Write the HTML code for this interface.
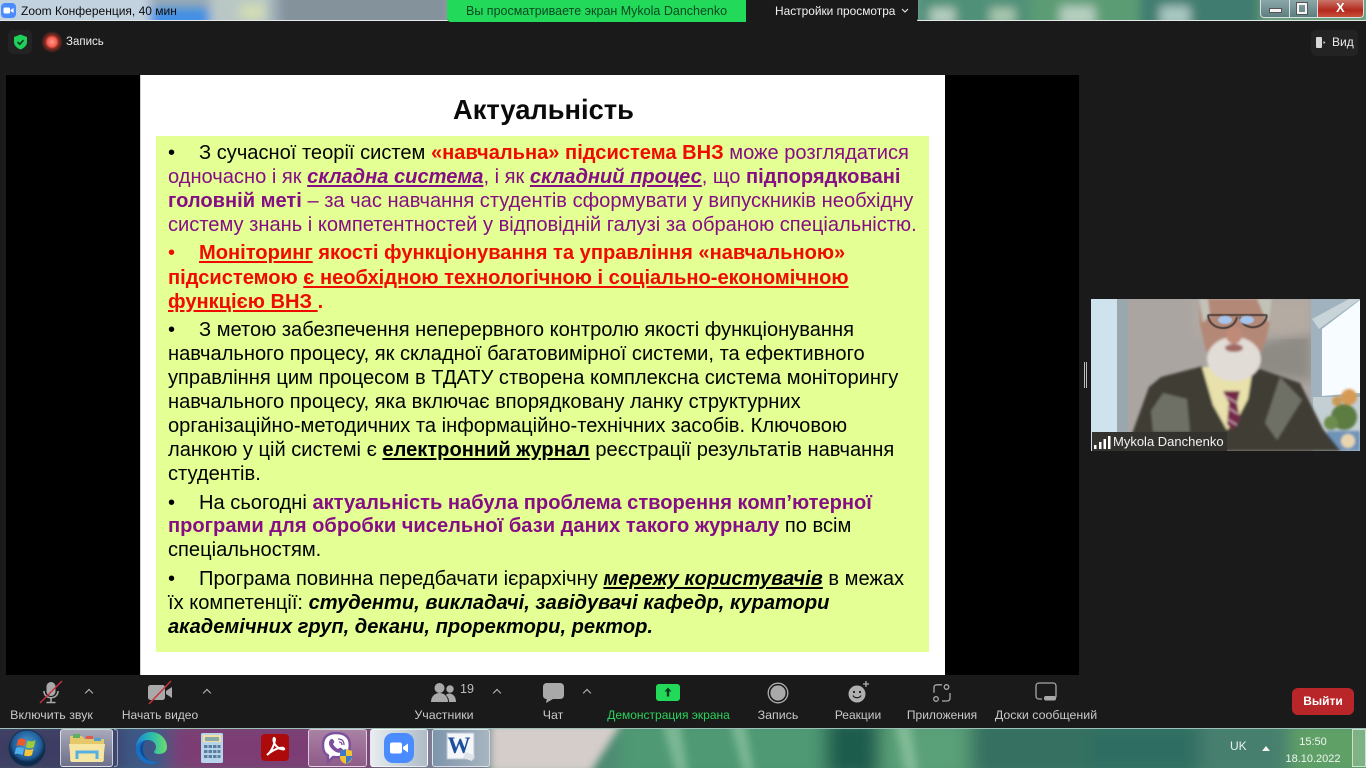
<!DOCTYPE html>
<html lang="uk"><head><meta charset="utf-8"><title>Zoom</title>
<style>
*{box-sizing:border-box}
html,body{margin:0;padding:0;width:1366px;height:768px;overflow:hidden;background:#1a1a1a;font-family:"Liberation Sans",sans-serif}
.a{position:absolute}
svg{position:absolute;display:block}
.l{position:absolute;left:168px;white-space:nowrap;font-size:20.1px;line-height:24px;height:24px;color:#000;filter:blur(.3px)}
.l .t{position:absolute;left:31px;top:0}
.p{color:#850e85}.r{color:#f00b00}.b{font-weight:bold}.u{text-decoration:underline;text-decoration-thickness:1.5px;text-underline-offset:2px}.i{font-style:italic}
.tb{position:absolute;top:708px;font-size:12.4px;line-height:14px;color:#c9c9c9;white-space:nowrap;transform:translateX(-50%)}
.chev{position:absolute;top:690px;width:6px;height:6px;border-left:1.3px solid #bbb;border-top:1.3px solid #bbb;transform:rotate(45deg)}
.btn{position:absolute;top:729px;height:38px;border:1px solid rgba(255,255,255,.65);border-radius:3px;background:linear-gradient(180deg,rgba(255,255,255,.55),rgba(255,255,255,.25))}
</style></head><body>

<!-- title bar wallpaper -->
<svg style="left:0;top:0" width="1366" height="21" viewBox="0 0 1366 21"><defs><filter id="f1" x="-10%" y="-50%" width="120%" height="200%"><feGaussianBlur stdDeviation="5"/></filter></defs>
<rect width="1366" height="21" fill="#9aaab4"/>
<g filter="url(#f1)">
<rect x="-20" y="-10" width="170" height="40" fill="#c3d2df"/>
<rect x="150" y="8" width="60" height="20" fill="#3f8fe6"/>
<rect x="210" y="-10" width="60" height="40" fill="#b9c7c4"/>
<rect x="240" y="4" width="25" height="16" fill="#d2dcb4"/>
<rect x="280" y="-10" width="170" height="40" fill="#84929c"/>
<rect x="915" y="-10" width="120" height="40" fill="#4f9078"/>
<rect x="1030" y="-10" width="110" height="40" fill="#5c9c74"/>
<rect x="930" y="8" width="25" height="16" fill="#b6cfc0"/>
<rect x="990" y="8" width="25" height="16" fill="#a9c8b0"/>
<rect x="1060" y="6" width="35" height="20" fill="#b6cfc0"/>
<rect x="1140" y="-10" width="130" height="40" fill="#3f7d70"/>
<rect x="1160" y="6" width="30" height="20" fill="#a9c8c2"/>
<rect x="1260" y="-10" width="110" height="40" fill="#6ba07a"/>
</g>
<rect y="20" width="1366" height="1" fill="#e4e8e8"/></svg>

<svg style="left:1px;top:3px" width="15" height="15" viewBox="0 0 15 15"><rect width="15" height="15" rx="4" fill="#4a8cff"/><rect x="2.5" y="4.5" width="6.5" height="6" rx="1.2" fill="#fff"/><path d="M9.6 7l3-2v5l-3-2z" fill="#fff"/></svg>
<div class="a" style="left:21px;top:3px;font-size:12px;line-height:16px;color:#0c0c0c;white-space:nowrap">Zoom Конференция, 40 мин</div>

<!-- view banner -->
<div class="a" style="left:447px;top:0;width:471px;height:22px;background:#1a1a1a;border-radius:0 0 4px 4px"></div>
<div class="a" style="left:447px;top:0;width:299px;height:22px;background:#23d959;border-radius:0 0 0 4px"></div>
<div class="a" style="left:466px;top:4px;font-size:12.5px;line-height:14px;color:#0a4a22;white-space:nowrap">Вы просматриваете экран Mykola Danchenko</div>
<div class="a" style="left:775px;top:4px;font-size:11.9px;line-height:14px;color:#f2f2f2;white-space:nowrap">Настройки просмотра</div>
<svg style="left:901px;top:8px" width="8" height="6" viewBox="0 0 8 6"><path d="M1 1l3 3 3-3" fill="none" stroke="#ddd" stroke-width="1.2"/></svg>

<!-- window buttons -->
<div class="a" style="left:1260px;top:0;width:104px;height:18px;border:1px solid #d6e0e0;border-top:0;border-radius:0 0 4px 4px;background:linear-gradient(180deg,#8ba6a8,#5d7f80);overflow:hidden">
<div class="a" style="left:56px;top:0;width:48px;height:17px;background:linear-gradient(180deg,#c9766a,#b5281c 60%,#c8503c)"></div>
<div class="a" style="left:28px;top:0;width:1px;height:17px;background:#d6e0e0"></div>
<div class="a" style="left:56px;top:0;width:1px;height:17px;background:#d6e0e0"></div>
<div class="a" style="left:8px;top:8px;width:13px;height:5px;background:#f4f4f4;border:1px solid #555"></div>
<div class="a" style="left:36px;top:3px;width:10px;height:11px;border:2px solid #f4f4f4;outline:1px solid #555"></div>
<div class="a" style="left:75px;top:0;font-size:13px;line-height:15px;font-weight:bold;color:#fff">X</div>
</div>

<!-- zoom top -->
<div class="a" style="left:8px;top:30px;width:24px;height:24px;background:#232323;border-radius:5px"></div>
<svg style="left:13px;top:34px" width="15" height="16" viewBox="0 0 15 16"><path d="M7.5 .5L14 3v5c0 3.6-2.8 6-6.5 7.5C3.800 14 1 11.600 1 8V3z" fill="#1fd158"/><path d="M4.500 8l2.200 2.200 3.800-4" fill="none" stroke="#103a20" stroke-width="1.600"/></svg>
<svg style="left:41px;top:31px" width="22" height="22" viewBox="0 0 22 22"><defs><radialGradient id="rg"><stop offset="0" stop-color="#ff9a8c"/><stop offset=".45" stop-color="#f25a4c"/><stop offset=".6" stop-color="#8f2c24"/><stop offset="1" stop-color="#1a1a1a"/></radialGradient></defs><circle cx="11" cy="11" r="11" fill="url(#rg)"/></svg>
<div class="a" style="left:66px;top:35px;font-size:11.5px;line-height:14px;color:#ececec">Запись</div>
<div class="a" style="left:1311px;top:30px;width:47px;height:26px;background:#232323;border-radius:5px"></div>
<svg style="left:1315px;top:36px" width="14" height="13" viewBox="0 0 14 13"><rect x="1" y="1" width="6" height="11" rx="1" fill="#d8d8d8"/><path d="M8.500 5l2 1.500-2 1.500z" fill="#d8d8d8"/></svg>
<div class="a" style="left:1332px;top:35px;font-size:12px;line-height:14px;color:#ececec">Вид</div>

<!-- share area -->
<div class="a" style="left:6px;top:75px;width:1073px;height:600px;background:#000"></div>
<div class="a" style="left:140px;top:75px;width:805px;height:600px;background:#fff;border-left:1px solid #cfcfcf"></div>
<div class="a" style="left:156px;top:136px;width:773px;height:516px;background:#e4ff94"></div>
<div class="a" style="left:453px;top:92px;font-size:27.3px;line-height:36px;font-weight:bold;color:#0a0a0a;white-space:nowrap">Актуальність</div>

<div class="l" style="top:141px">•<span class="t">З сучасної теорії систем <span class="r b">«навчальна» підсистема ВНЗ</span> <span class="p">може розглядатися</span></span></div>
<div class="l p" style="top:165px">одночасно і як <span class="b i u">складна система</span>, і як <span class="b i u">складний процес</span>, що <span class="b">підпорядковані</span></div>
<div class="l p" style="top:189px"><span class="b">головній меті</span> – за час навчання студентів сформувати у випускників необхідну</div>
<div class="l p" style="top:213px">систему знань і компетентностей у відповідній галузі за обраною спеціальністю.</div>
<div class="l r b" style="top:241px"><span style="font-weight:normal">•</span><span class="t"><span class="u">Моніторинг</span> якості функціонування та управління «навчальною»</span></div>
<div class="l r b" style="top:266px">підсистемою <span class="u">є необхідною технологічною і соціально-економічною</span></div>
<div class="l r b" style="top:290px"><span class="u">функцією ВНЗ </span> .</div>
<div class="l" style="top:318px">•<span class="t">З метою забезпечення неперервного контролю якості функціонування</span></div>
<div class="l" style="top:342px">навчального процесу, як складної багатовимірної системи, та ефективного</div>
<div class="l" style="top:366px">управління цим процесом в ТДАТУ створена комплексна система моніторингу</div>
<div class="l" style="top:390px">навчального процесу, яка включає впорядковану ланку структурних</div>
<div class="l" style="top:414px">організаційно-методичних та інформаційно-технічних засобів. Ключовою</div>
<div class="l" style="top:438px">ланкою у цій системі є <span class="b u">електронний журнал</span> реєстрації результатів навчання</div>
<div class="l" style="top:462px">студентів.</div>
<div class="l" style="top:491px">•<span class="t">На сьогодні <span class="p b">актуальність набула проблема створення комп’ютерної</span></span></div>
<div class="l" style="top:514px"><span class="p b">програми для обробки чисельної бази даних такого журналу</span> по всім</div>
<div class="l" style="top:538px">спеціальностям.</div>
<div class="l" style="top:567px">•<span class="t">Програма повинна передбачати ієрархічну <span class="b i u">мережу користувачів</span> в межах</span></div>
<div class="l" style="top:591px">їх компетенції: <span class="b i">студенти, викладачі, завідувачі кафедр, куратори</span></div>
<div class="l b i" style="top:615px">академічних груп, декани, проректори, ректор.</div>

<!-- divider handle -->
<div class="a" style="left:1084px;top:362px;width:1px;height:26px;background:#bdbdbd"></div>
<div class="a" style="left:1086px;top:362px;width:1px;height:26px;background:#bdbdbd"></div>

<!-- video -->
<svg style="left:1091px;top:299px" width="269" height="152" viewBox="0 0 269 152"><defs><filter id="b1" x="-10%" y="-10%" width="120%" height="120%"><feGaussianBlur stdDeviation="1.200"/></filter><filter id="b3"><feGaussianBlur stdDeviation=".6"/></filter><filter id="b2"><feGaussianBlur stdDeviation="5"/></filter><clipPath id="cp"><rect width="269" height="152"/></clipPath></defs>
<g clip-path="url(#cp)">
<rect width="269" height="152" fill="#a9a3a0"/>
<rect width="27" height="152" fill="#cfe3ee"/>
<rect x="26" width="11" height="152" fill="#9aa8ae"/>
<rect x="37" y="0" width="183" height="152" fill="#aba5a2"/>
<path d="M150 48l70-16 0 50-55-6z" fill="#8e8b84" filter="url(#b2)"/>
<rect x="105" y="0" width="115" height="36" fill="#b4aba2" filter="url(#b2)"/>
<rect x="220" width="49" height="152" fill="#9fb2bd"/>
<path d="M231 30L269 1v93l-38 3z" fill="#f6fcff"/>
<path d="M221 20L269 -6v6L228 30z" fill="#c8d4d8"/>
<rect x="222" y="98" width="47" height="54" fill="#c4cfd4"/>
<g filter="url(#b1)">
<circle cx="253" cy="118" r="13" fill="#5c7b42"/><circle cx="240" cy="124" r="7" fill="#6d8c4e"/><circle cx="258" cy="98" r="8" fill="#d69a55"/><circle cx="246" cy="102" r="5" fill="#c99a55"/>
<rect x="236" y="132" width="33" height="20" fill="#6f93b8"/><circle cx="257" cy="142" r="7" fill="#e8d5b0"/>
<path d="M34 152L42 132 58 88 70 78 112 67 136 90 166 69 209 84 232 130 250 152z" fill="#403d36"/>
<path d="M60 112L72 94 96 100 99 133 62 133zM189 78L211 101 186 141 174 124z" fill="#6e6f66"/>
<path d="M111 68L162 68 157 100 146 121 136 131 122 106z" fill="#e8e1ac"/>
<path d="M132 92h17l-3 12 3 17-8 10-5-6 2-21z" fill="#75284a"/>
<path d="M134 97l12 7M136 108l11 7M136 120l10 6" stroke="#cda8b4" stroke-width="1.500"/>
<path d="M108 0h73l-2 22-4 20-8 18-30 6-22-14-6-26z" fill="#b38876"/>
<path d="M108 0h9l2 16-7 8zM181 0h-15l6 14 6 10z" fill="#c2c2b8"/>
<ellipse cx="143" cy="60" rx="27" ry="22" fill="#e2dcd6"/>
<ellipse cx="143" cy="49" rx="9" ry="4" fill="#a06a64"/>
<ellipse cx="143" cy="36" rx="8" ry="9" fill="#c08a78"/>
</g>
<g filter="url(#b3)">
<path d="M117 16h59M117 16c1 16 26 18 29 2M149 18c2 14 25 14 27-2" fill="none" stroke="#332b29" stroke-width="1.600"/>
<ellipse cx="134" cy="21" rx="7" ry="4" fill="#a6c4ec"/><ellipse cx="156" cy="21" rx="7" ry="4" fill="#a6c4ec"/>
</g>
<rect x="1" y="133" width="135" height="19" fill="#33322f"/>
<rect x="3" y="146" width="2.500" height="4" fill="#fff"/><rect x="8" y="143" width="2.500" height="7" fill="#fff"/><rect x="12.500" y="140" width="2.500" height="10" fill="#fff"/><rect x="17" y="137" width="2.500" height="13" fill="#fff"/>
<text x="22" y="147" font-family="Liberation Sans" font-size="13" fill="#f2f2f2">Mykola Danchenko</text>
</g></svg>

<!-- toolbar icons -->
<svg style="left:37px;top:680px" width="28" height="26" viewBox="0 0 28 26"><rect x="9.500" y="2" width="9" height="14" rx="4.500" fill="#a9a9a9"/><path d="M7 11c0 9 14 9 14 0M14 18v4M9.500 22.500h9" fill="none" stroke="#a9a9a9" stroke-width="1.600"/><path d="M3 23L25 1" stroke="#c9303a" stroke-width="1.400"/></svg>
<div class="chev" style="left:86px"></div>
<div class="tb" style="left:51.5px">Включить звук</div>
<svg style="left:146px;top:680px" width="28" height="26" viewBox="0 0 28 26"><rect x="2" y="5" width="17" height="15" rx="2.500" fill="#a9a9a9"/><path d="M20 11l6-4v11l-6-4z" fill="#a9a9a9"/><path d="M3 24L25 1" stroke="#c9303a" stroke-width="1.400"/></svg>
<div class="chev" style="left:204px"></div>
<div class="tb" style="left:160px;font-size:12px">Начать видео</div>
<svg style="left:431px;top:682px" width="26" height="21" viewBox="0 0 26 21"><circle cx="8.500" cy="6" r="5" fill="#a9a9a9"/><path d="M0 20c0-12 17-12 17 0z" fill="#a9a9a9"/><circle cx="19" cy="7" r="3.700" fill="#a9a9a9"/><path d="M18 20h7c0-9-8-10-10-7 2 2 3 4 3 7z" fill="#a9a9a9"/></svg>
<div class="a" style="left:460px;top:682px;font-size:12.5px;line-height:15px;color:#bdbdbd">19</div>
<div class="chev" style="left:494px"></div>
<div class="tb" style="left:444px">Участники</div>
<svg style="left:541px;top:682px" width="26" height="22" viewBox="0 0 26 22"><path d="M6 1h13c2.500 0 4 1.500 4 4v8c0 2.500-1.500 4-4 4H12l-7 4 .8-4C3 17 2 15.500 2 13V5c0-2.500 1.500-4 4-4z" fill="#a9a9a9"/></svg>
<div class="chev" style="left:584px"></div>
<div class="tb" style="left:553px">Чат</div>
<div class="a" style="left:656px;top:684px;width:24px;height:17px;background:#23d959;border-radius:3px"></div>
<svg style="left:662px;top:686px" width="12" height="12" viewBox="0 0 12 12"><path d="M6 1.500L2.500 5.500h2.300v5h2.400v-5h2.300z" fill="#0c3a1e"/></svg>
<div class="tb" style="left:668.5px;color:#2bd15c;font-size:12px">Демонстрация экрана</div>
<svg style="left:767px;top:682px" width="22" height="22" viewBox="0 0 22 22"><circle cx="11" cy="11" r="9.800" fill="none" stroke="#b0b0b0" stroke-width="1.300"/><circle cx="11" cy="11" r="7.600" fill="#a9a9a9"/></svg>
<div class="tb" style="left:778px">Запись</div>
<svg style="left:847px;top:680px" width="24" height="24" viewBox="0 0 24 24"><circle cx="10" cy="14" r="8.500" fill="#b0b0b0"/><circle cx="7" cy="12" r="1.100" fill="#1a1a1a"/><circle cx="13" cy="12" r="1.100" fill="#1a1a1a"/><path d="M6 15.500c1.500 3 6.500 3 8 0" fill="none" stroke="#1a1a1a" stroke-width="1.200"/><path d="M19 1v6M16 4h6" stroke="#b0b0b0" stroke-width="1.300"/></svg>
<div class="tb" style="left:858px;font-size:12px">Реакции</div>
<svg style="left:932px;top:683px" width="20" height="20" viewBox="0 0 20 20" fill="none" stroke="#a9a9a9" stroke-width="1.300"><circle cx="14.500" cy="4" r="2.300"/><circle cx="4" cy="16" r="2.300"/><path d="M10 1.800H5c-2 0-3 1-3 3v5M10 18h5c2 0 3-1 3-3v-5"/></svg>
<div class="tb" style="left:942px;font-size:12px">Приложения</div>
<svg style="left:1035px;top:682px" width="22" height="21" viewBox="0 0 22 21"><path d="M7 17H4c-1.700 0-3-1.300-3-3V4c0-1.700 1.300-3 3-3h14c1.700 0 3 1.300 3 3v10c0 1.700-1.300 3-3 3" fill="none" stroke="#a9a9a9" stroke-width="1.300"/><rect x="9" y="14" width="12" height="4.500" rx="2" fill="#a9a9a9"/></svg>
<div class="tb" style="left:1046px">Доски сообщений</div>
<div class="a" style="left:1292px;top:688px;width:62px;height:27px;background:#b8262a;border-radius:6px;color:#fff;font-size:12px;font-weight:bold;line-height:27px;text-align:center">Выйти</div>

<!-- taskbar -->
<svg style="left:0;top:728px" width="1366" height="40" viewBox="0 0 1366 40"><defs><filter id="f2" x="-10%" y="-50%" width="120%" height="200%"><feGaussianBlur stdDeviation="9"/></filter><filter id="f3" x="-10%" y="-50%" width="120%" height="200%"><feGaussianBlur stdDeviation="4"/></filter>
<radialGradient id="orb" cx=".5" cy=".4"><stop offset="0" stop-color="#4aa3d4"/><stop offset=".8" stop-color="#1f5a96"/><stop offset="1" stop-color="#0d2b4d"/></radialGradient>
<linearGradient id="edgeT" x1="0" y1=".5" x2="1" y2=".5"><stop offset="0" stop-color="#1c86d6"/><stop offset=".55" stop-color="#2fc0a8"/><stop offset="1" stop-color="#6fdc6c"/></linearGradient></defs>
<rect width="1366" height="40" fill="#4d8a72"/>
<g filter="url(#f2)">
<rect x="-20" y="-10" width="140" height="60" fill="#3c3c63"/>
<rect x="120" y="-10" width="50" height="60" fill="#3d5686"/>
<rect x="170" y="-10" width="210" height="60" fill="#7c3d74"/>
<rect x="380" y="-10" width="112" height="60" fill="#7d7a92"/>
<rect x="620" y="-10" width="210" height="60" fill="#4f9a74"/>
<rect x="825" y="-10" width="55" height="60" fill="#1d5c4e"/>
<rect x="880" y="-10" width="90" height="60" fill="#5aa078"/>
<rect x="970" y="-10" width="120" height="60" fill="#356f60"/>
<rect x="1090" y="-10" width="110" height="60" fill="#2f6e62"/>
<rect x="1200" y="-10" width="90" height="60" fill="#467f6e"/>
<rect x="1290" y="-10" width="90" height="60" fill="#5fa066"/>
</g>
<path d="M490 -5H622L590 45H490z" fill="#d4cdca" filter="url(#f3)"/>
<g filter="url(#f3)" opacity=".55">
<path d="M662 -5l14 50h12L680 -5zM730 -5l14 50h10L745 -5zM895 -5l10 50h14L910 -5z" fill="#9fd0ae"/>
</g>
<rect width="1366" height="1" fill="#9fc0b8"/>
<circle cx="27" cy="20" r="18" fill="url(#orb)" stroke="#16324f"/>
<path d="M18 12c3-3 5-1 8 0l-1.500 6.500c-3-1-5-2-8-.5z" fill="#ee5a2c"/>
<path d="M27.500 12.500c3 1 5 1.500 8-.5L34 19c-3 2-5 1-8 .5z" fill="#9ccc3c"/>
<path d="M16 20c3-1.500 5-.5 8 .5L22.500 27c-3-1-5-2-8-.5z" fill="#4fb0ef"/>
<path d="M25.500 21c3 1 5 1.500 8-.5L32 27c-3 2-5 1-8 .5z" fill="#f7c235"/>
</svg>

<div class="btn" style="left:60px;width:53px"></div>
<div class="a" style="left:114px;top:729px;width:4px;height:38px;border:1px solid rgba(255,255,255,.5);border-left:0;border-radius:0 3px 3px 0"></div>
<svg style="left:68px;top:733px" width="38" height="30" viewBox="0 0 38 30"><path d="M2 3h12l3 3h19v22H2z" fill="#e5c86a"/><rect x="5" y="1" width="7" height="4" fill="#5eb060"/><rect x="18" y="3" width="7" height="3" fill="#e05a50"/><rect x="26" y="5" width="7" height="3" fill="#4fa0d0"/><path d="M1 11h36l-2 18H3z" fill="#f6e6a4"/><path d="M9 26v-7h20v7" fill="none" stroke="#58b0e0" stroke-width="3"/></svg>
<svg style="left:135px;top:732px" width="32" height="32" viewBox="0 0 32 32"><path d="M1 15C3 10 8 8 13 8 9 9 8 13 8 17c0 7 6 13 14 13 2 0 4-.5 6-2-3 3-8 4-12 4C7 32 0 25 1 15z" fill="#1a6fc0"/><path d="M13 8c-4 1-5 5-5 9 0 5 3 10 8 12-6-1-11-6-11-12 0-5 4-9 8-9z" fill="#0d4f9c"/><path d="M1 15C2 6 8 0 16 0c9 0 16 7 16 15 0 5-4 7-8 7-3 0-5-1-5-2s2-2 2-5c0-4-4-7-8-7C8 8 3 10 1 15z" fill="url(#edgeT)"/></svg>
<svg style="left:201px;top:733px" width="22" height="30" viewBox="0 0 22 30"><rect width="22" height="30" rx="1.500" fill="#b8d4ea"/><rect x="2" y="2" width="18" height="7" fill="#f4dfa0"/><rect x="4" y="4" width="14" height="4" fill="#8aa"/><g fill="#5b7fa0"><rect x="3" y="12" width="3.500" height="3"/><rect x="7.500" y="12" width="3.500" height="3"/><rect x="12" y="12" width="3.500" height="3"/><rect x="16.500" y="12" width="3" height="3"/><rect x="3" y="17" width="3.500" height="3"/><rect x="7.500" y="17" width="3.500" height="3"/><rect x="12" y="17" width="3.500" height="3"/><rect x="16.500" y="17" width="3" height="3"/><rect x="3" y="22" width="3.500" height="3"/><rect x="7.500" y="22" width="3.500" height="3"/><rect x="12" y="22" width="3.500" height="3"/><rect x="16.500" y="22" width="3" height="3"/></g></svg>
<svg style="left:261px;top:734px" width="28" height="27" viewBox="0 0 28 27"><rect width="28" height="27" rx="4" fill="#ad0b0b"/><path d="M6 21c4-3 7-9 8-15 0-2-1-3-1.500-1-.5 4 3.500 10 10 10.500 1.500 0 .8-2-2-1.800C15.500 14 9 18 6 21z" fill="none" stroke="#fff" stroke-width="2"/></svg>

<div class="btn" style="left:308px;width:59px;background:linear-gradient(180deg,rgba(255,255,255,.35),rgba(255,255,255,.15))"></div>
<svg style="left:321px;top:732px" width="34" height="34" viewBox="0 0 34 34"><path d="M15 1c-7 0-13 3-13 12 0 5 1.500 9 5 10.500V30l5-5c6 .500 14 0 16-6 1-4 1-8 0-11-2-5-7-7-13-7z" fill="#fff" stroke="#7b519d" stroke-width="2.400"/><path d="M9 8c2-2 3-1 4 1 .6 1 0 2-1 3 1 2 3 4 5 5 1-1 2-1.500 3-1 2 1 3 2 1 4-3 2-7 0-10-3S7 11 9 8z" fill="#7b519d"/><path d="M17 7c4 0 6 2 6 6M18 10c2 0 3 1 3 3" fill="none" stroke="#7b519d" stroke-width="1.300"/><path d="M19 19l6-2 6 2v6c0 4-3 6-6 7-3-1-6-3-6-7z" fill="#f2c230"/><path d="M25 17v7h-6v-5zM25 24h6c0 4-3 6-6 8z" fill="#3f78c8"/></svg>

<div class="btn" style="left:370px;width:58px;background:linear-gradient(90deg,#e7edf0,#aebcc6)"></div>
<svg style="left:384px;top:733px" width="30" height="30" viewBox="0 0 30 30"><rect width="30" height="30" rx="9" fill="#4a8cff"/><rect x="6" y="9.500" width="12" height="11" rx="2" fill="#fff"/><path d="M19 14l5-3.500v9L19 16z" fill="#fff"/></svg>

<div class="btn" style="left:432px;width:58px;background:linear-gradient(90deg,#7d95ab,#a7b5bf)"></div>
<svg style="left:446px;top:732px" width="30" height="30" viewBox="0 0 30 30"><rect x="1" y="1" width="27" height="26" fill="#f4f6fa" stroke="#b8c4d4"/><text x="1.500" y="21" font-family="Liberation Serif" font-weight="bold" font-size="23" fill="#1d4f9f">W</text><path d="M20 20l9 4-3 5-9-3z" fill="#dfe4ea"/></svg>

<div class="a" style="left:1230px;top:739px;font-size:12px;line-height:14px;color:#e8f0ee">UK</div>
<svg style="left:1262px;top:746px" width="8" height="5" viewBox="0 0 8 5"><path d="M4 0L8 5H0z" fill="#f2f2f2"/></svg>
<div class="a" style="left:1278px;top:733px;width:70px;text-align:center;font-size:11px;line-height:17px;color:#f0f4f2;padding-top:1px">15:50<br>18.10.2022</div>
<div class="a" style="left:1352px;top:729px;width:14px;height:38px;border:1px solid rgba(255,255,255,.6);background:rgba(255,255,255,.2)"></div>
</body></html>
